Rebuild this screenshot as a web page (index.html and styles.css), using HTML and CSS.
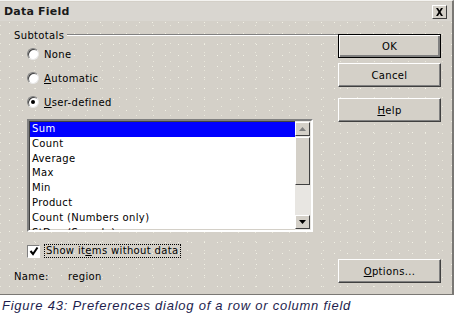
FILE: index.html
```html
<!DOCTYPE html>
<html>
<head>
<meta charset="utf-8">
<link rel="stylesheet" href="styles.css">
</head>
<body>
<div class="dialog">
  <div class="titlebar">
    <span class="title">Data Field</span>
    <span class="close">
      <svg width="9" height="8" viewBox="0 0 9 8"><path d="M1 0h2l1.5 2.5L6 0h2L5.5 4 8 8H6L4.5 5.5 3 8H1l2.5-4z" fill="#000"/></svg>
    </span>
  </div>
  <div class="content">
    <div class="left">
      <div class="group-head"><span>Subtotals</span><span class="rule"></span></div>
      <div class="radio-row first"><span class="radio"></span><span>None</span></div>
      <div class="radio-row"><span class="radio"></span><span><u>A</u>utomatic</span></div>
      <div class="radio-row"><span class="radio checked"></span><span><u>U</u>ser-defined</span></div>
      <div class="listbox">
        <div class="items">
          <div class="item sel">Sum</div>
          <div class="item">Count</div>
          <div class="item">Average</div>
          <div class="item">Max</div>
          <div class="item">Min</div>
          <div class="item">Product</div>
          <div class="item">Count (Numbers only)</div>
          <div class="item">StDev (Sample)</div>
        </div>
        <div class="scrollbar">
          <div class="sb-btn"><svg width="7" height="4" viewBox="0 0 7 4"><path d="M0 4h7L3.5 0z" fill="#808080"/></svg></div>
          <div class="sb-thumb"></div>
          <div class="sb-track"></div>
          <div class="sb-btn"><svg width="7" height="4" viewBox="0 0 7 4"><path d="M0 0h7L3.5 4z" fill="#000"/></svg></div>
        </div>
      </div>
      <div class="check-row">
        <span class="checkbox"><svg width="10" height="10" viewBox="0 0 10 10"><path d="M1.5 5l2.5 3L8.5 1.5" fill="none" stroke="#000" stroke-width="2"/></svg></span>
        <span class="focus">Show it<u>e</u>ms without data</span>
      </div>
      <div class="name-row"><span class="name-label">Name:</span><span>region</span></div>
    </div>
    <div class="right">
      <button class="btn default">OK</button>
      <button class="btn cancel">Cancel</button>
      <button class="btn help"><u>H</u>elp</button>
      <button class="btn options"><u>O</u>ptions...</button>
    </div>
  </div>
</div>
<p class="caption">Figure 43: Preferences dialog of a row or column field</p>
</body>
</html>
```

FILE: styles.css
```css
html, body {
  margin: 0;
  padding: 0;
  background: #ffffff;
}
body {
  width: 456px;
  height: 317px;
  overflow: hidden;
  font-family: "DejaVu Sans", sans-serif;
  font-size: 10px;
  letter-spacing: 0.35px;
  color: #000;
}
.dialog {
  width: 452px;
  height: 293px;
  border-top: 1px solid #f4f3f0;
  border-right: 2px solid #7a7874;
  border-bottom: 1px solid #7a7874;
  background-color: #d4d0c8;
  background-image:
    radial-gradient(circle, rgba(255,255,240,0.7) 0.6px, transparent 0.9px),
    radial-gradient(circle, rgba(255,255,240,0.5) 0.6px, transparent 0.9px);
  background-size: 13px 11px, 17px 9px;
  background-position: 3px 5px, 9px 2px;
  display: flex;
  flex-direction: column;
}
.titlebar {
  height: 19px;
  margin-top: 1px;
  background: #d9d6d0;
  display: flex;
  align-items: center;
  justify-content: space-between;
  padding: 0 4px 0 4px;
}
.title {
  font-weight: bold;
  font-size: 11px;
  letter-spacing: 0.2px;
  color: #1a1a1a;
}
.close {
  width: 13px;
  height: 12px;
  margin-top: 1px;
  margin-right: 1px;
  background: #d4d0c8;
  border: 1px solid;
  border-color: #ffffff #404040 #404040 #ffffff;
  display: flex;
  align-items: center;
  justify-content: center;
}
.content {
  flex: 1;
  display: flex;
}
.left {
  width: 324px;
  padding-left: 14px;
  display: flex;
  flex-direction: column;
}
.group-head {
  display: flex;
  align-items: center;
  height: 14px;
  margin-top: 7px;
}
.group-head .rule {
  flex: 1;
  height: 0;
  border-top: 1px solid #808080;
  border-bottom: 1px solid #ffffff;
  margin-left: 3px;
}
.radio-row {
  display: flex;
  align-items: center;
  height: 14px;
  margin-top: 10px;
  padding-left: 13px;
  gap: 5px;
}
.radio-row.first { margin-top: 5px; }
.radio {
  width: 10px;
  height: 10px;
  border-radius: 50%;
  background: #fff;
  border: 1px solid;
  border-color: #808080 #e8e8e8 #e8e8e8 #808080;
  box-shadow: inset 1px 1px 0 #404040;
  position: relative;
}
.radio.checked::after {
  content: "";
  position: absolute;
  left: 3px;
  top: 3px;
  width: 4px;
  height: 4px;
  border-radius: 50%;
  background: #000;
}
.listbox {
  margin-top: 10px;
  margin-left: 13px;
  width: 282px;
  height: 109px;
  border: 2px solid;
  border-color: #808080 #ffffff #ffffff #808080;
  box-shadow: inset 1px 1px 0 #404040, inset -1px -1px 0 #d4d0c8;
  background: #fff;
  display: flex;
  overflow: hidden;
}
.items {
  flex: 1;
  padding-top: 1px;
  padding-left: 1px;
  overflow: hidden;
}
.item {
  height: 14.8px;
  line-height: 14.8px;
  padding-left: 2px;
  white-space: nowrap;
}
.item.sel {
  background: #0000ff;
  color: #fff;
}
.scrollbar {
  width: 15px;
  display: flex;
  flex-direction: column;
  padding: 1px 1px 1px 0;
  background: #e8e6e2;
}
.sb-btn {
  height: 12px;
  background: #d4d0c8;
  border: 1px solid;
  border-color: #ffffff #404040 #404040 #ffffff;
  display: flex;
  align-items: center;
  justify-content: center;
}
.sb-thumb {
  height: 46px;
  margin-top: 1px;
  background: #d4d0c8;
  border: 1px solid;
  border-color: #ffffff #404040 #404040 #ffffff;
}
.sb-track {
  flex: 1;
}
.check-row {
  display: flex;
  align-items: center;
  margin-top: 12px;
  padding-left: 13px;
  gap: 4px;
  height: 14px;
}
.checkbox {
  width: 11px;
  height: 11px;
  background: #fff;
  border: 1px solid;
  border-color: #808080 #ffffff #ffffff #808080;
  display: flex;
  align-items: center;
  justify-content: center;
}
.focus {
  border: 1px dotted #000;
  padding: 0 1px;
  line-height: 12px;
}
.name-row {
  display: flex;
  margin-top: 11px;
  height: 14px;
  align-items: center;
}
.name-label {
  width: 54px;
}
.right {
  display: flex;
  flex-direction: column;
  padding-left: 0;
}
.btn {
  width: 103px;
  height: 24px;
  font-family: "DejaVu Sans", sans-serif;
  font-size: 10px;
  letter-spacing: 0.35px;
  color: #000;
  background: #d4d0c8;
  border: 1px solid;
  border-color: #ffffff #404040 #404040 #ffffff;
  box-shadow: inset -1px -1px 0 #808080;
  padding: 0;
  margin-left: 0;
}
.btn.default {
  margin-top: 13px;
  border: 1px solid #000;
  box-shadow: inset 1px 1px 0 #ffffff, inset -2px -2px 0 #808080;
}
.btn.cancel { margin-top: 5px; }
.btn.help { margin-top: 11px; }
.btn.options { margin-top: 137px; }
.caption {
  margin: 3px 0 0 2px;
  font-family: "Liberation Sans", Arial, sans-serif;
  font-style: italic;
  font-size: 13px;
  letter-spacing: 0.75px;
  color: #1e1e4e;
}
```
